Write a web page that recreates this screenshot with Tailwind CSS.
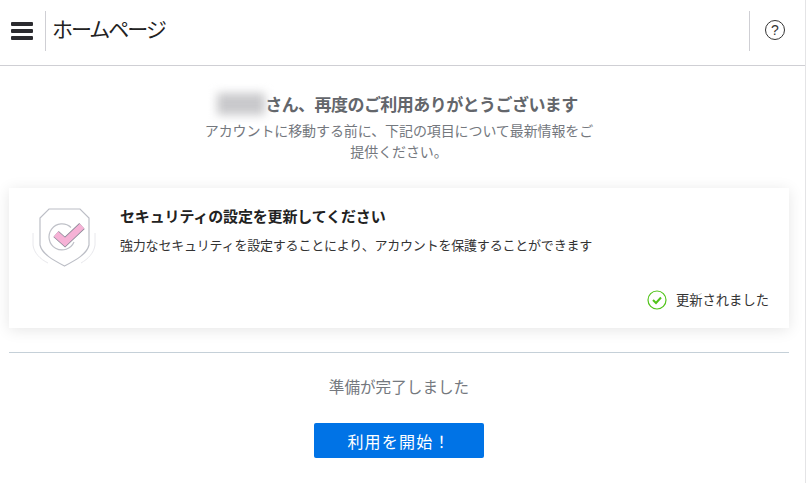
<!DOCTYPE html>
<html lang="ja">
<head>
<meta charset="utf-8">
<script src="https://cdn.jsdelivr.net/npm/@tailwindcss/browser@4"></script>
</head>
<body class="bg-white font-['Noto_Sans_CJK_JP','Liberation_Sans',sans-serif] overflow-hidden">
<div class="w-[806px] h-[483px] border-r border-[#e4e4e6] flex flex-col">
  <header class="h-[66px] border-b border-[#cfcfd4] flex items-center shrink-0">
    <div class="w-[45px] pr-[1px] mb-[4px] flex justify-center">
      <svg width="22" height="18" viewBox="0 0 22 18"><rect width="22" height="4" y="0" rx="1" fill="#2b2b2f"/><rect width="22" height="4" y="7" rx="1" fill="#2b2b2f"/><rect width="22" height="4" y="14" rx="1" fill="#2b2b2f"/></svg>
    </div>
    <div class="w-px h-[40px] bg-[#cfcfd4] mb-[3px]"></div>
    <h1 class="ml-[6px] text-[21px] leading-none text-[#222] mb-[9px] tracking-[-2px]">ホームページ</h1>
    <div class="ml-auto w-px h-[40px] bg-[#cfcfd4] mb-[3px]"></div>
    <div class="w-[55px] pr-[5px] flex justify-center mb-[5px]">
      <svg width="22" height="22" viewBox="0 0 22 22" fill="none"><circle cx="11" cy="11" r="9.5" stroke="#333" stroke-width="1"/><text x="11" y="16" text-anchor="middle" font-size="14" fill="#333" font-family="Liberation Sans">?</text></svg>
    </div>
  </header>

  <section class="flex flex-col items-center pt-[25px] pr-[7px]">
    <div class="flex items-center h-[26px] mr-[3px]">
      <div class="w-[48px] h-[22px] bg-[#c9c9cc] blur-[5px]"></div>
      <h2 class="text-[17px] leading-[26px] font-semibold tracking-[-0.55px] text-[#63666b]">さん、再度のご利用ありがとうございます</h2>
    </div>
    <p class="w-[400px] text-center text-[14px] leading-[21px] tracking-[-0.1px] text-[#74787e] mt-[3px]">アカウントに移動する前に、下記の項目について最新情報をご提供ください。</p>
  </section>

  <section class="mt-[26px] mx-[9px] h-[140px] w-[780px] bg-white shadow-[0_2px_14px_rgba(0,0,0,0.1)] flex relative shrink-0">
    <div class="w-[111px] pl-[23px] pt-[19px] shrink-0">
      <svg width="66" height="62" viewBox="0 0 66 62" fill="none">
        <path d="M1 26 V38 C2 46 8 52 16 56" stroke="#e8e8ec" stroke-width="1"/>
        <path d="M63 26 V38 C62 46 56 52 49 56" stroke="#e8e8ec" stroke-width="1"/>
        <path d="M17 2 H48 L57 11 V38 C55 47 44 53 32.5 59 C21 53 10 47 8 38 V11 Z" stroke="#bcbec6" stroke-width="1.2" fill="#fff"/>
        <path d="M39 20.5 A13 13 0 1 0 42 35" stroke="#bfc1c8" stroke-width="1.2"/>
        <path d="M24 27 L33 35 L50 19" stroke="#8d8a98" stroke-width="8"/>
        <path d="M24 27 L33 35 L50 19" stroke="#f6b2d6" stroke-width="6.5"/>
      </svg>
    </div>
    <div class="pt-[16px]">
      <h3 class="text-[15px] leading-[24px] font-semibold tracking-[-0.15px] text-[#222]">セキュリティの設定を更新してください</h3>
      <p class="text-[13px] leading-[20px] mt-[7px] tracking-[-0.2px] text-[#333]">強力なセキュリティを設定することにより、アカウントを保護することができます</p>
    </div>
    <div class="absolute right-[20px] top-[100px] flex items-center gap-[9px]">
      <svg width="20" height="20" viewBox="0 0 20 20" fill="none"><circle cx="10" cy="10" r="9" stroke="#52c41a" stroke-width="1.2"/><path d="M6 10 L9 13 L14 7.5" stroke="#52c41a" stroke-width="2"/></svg>
      <span class="text-[13.3px] leading-[24px] text-[#333]">更新されました</span>
    </div>
  </section>

  <div class="mt-[24px] mx-[9px] w-[780px] h-px bg-[#c5d0d8] shrink-0"></div>

  <section class="flex flex-col items-center w-[798px]">
    <p class="mt-[20px] text-[15.6px] leading-[26px] text-[#74787e]">準備が完了しました</p>
    <button class="mt-[24px] w-[170px] h-[35px] rounded-[2px] bg-[#0073e6] text-white text-[16px] tracking-[1.2px]">利用を開始！</button>
  </section>
</div>
</body>
</html>
